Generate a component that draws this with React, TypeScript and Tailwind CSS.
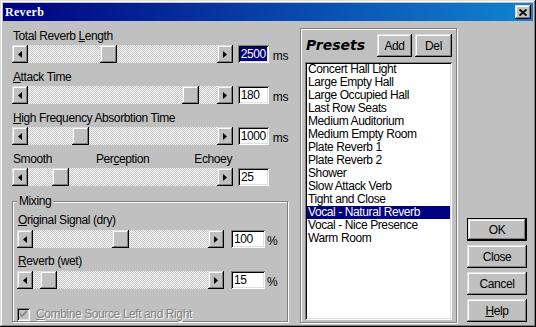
import React from "react";

const raised =
  "bg-[#c0c0c0] shadow-[inset_-1px_-1px_#000,inset_1px_1px_#dfdfdf,inset_-2px_-2px_#808080,inset_2px_2px_#fff]";
const sunken =
  "shadow-[inset_1px_1px_#808080,inset_-1px_-1px_#fff,inset_2px_2px_#000,inset_-2px_-2px_#dfdfdf]";
const etched = "border border-[#808080] shadow-[1px_1px_0_#fff,inset_1px_1px_0_#fff]";
const track =
  "bg-[repeating-conic-gradient(#c0c0c0_0_25%,#ffffff_0_50%)] bg-[length:2px_2px]";

const presets = [
  "Concert Hall Light",
  "Large Empty Hall",
  "Large Occupied Hall",
  "Last Row Seats",
  "Medium Auditorium",
  "Medium Empty Room",
  "Plate Reverb 1",
  "Plate Reverb 2",
  "Shower",
  "Slow Attack Verb",
  "Tight and Close",
  "Vocal - Natural Reverb",
  "Vocal - Nice Presence",
  "Warm Room",
];

function Arrow({ dir }: { dir: "left" | "right" }) {
  return (
    <div className={`w-[16px] h-full flex items-center justify-center ${raised}`}>
      <svg width="4" height="7" viewBox="0 0 4 7">
        {dir === "left" ? (
          <polygon points="4,0 0,3.5 4,7" fill="#000" />
        ) : (
          <polygon points="0,0 4,3.5 0,7" fill="#000" />
        )}
      </svg>
    </div>
  );
}

function Slider({ pos, width }: { pos: number; width: string }) {
  return (
    <div className={`flex h-[18px] ${width}`}>
      <Arrow dir="left" />
      <div className={`flex flex-1 ${track}`}>
        <div style={{ width: pos }} />
        <div className={`w-[17px] ${raised}`} />
      </div>
      <Arrow dir="right" />
    </div>
  );
}

function Field({ value, width, selected }: { value: string; width: string; selected?: boolean }) {
  return (
    <div className={`h-[18px] ${width} bg-white ${sunken} pl-[3px] pt-[2px] leading-[14px]`}>
      {selected ? <span className="bg-[#000080] text-white px-[1px] -ml-[1px]">{value}</span> : value}
    </div>
  );
}

function Btn({ children, w, def }: { children: React.ReactNode; w: string; def?: boolean }) {
  if (def)
    return (
      <div className={`${w} h-[23px] border border-black`}>
        <div className={`h-full flex items-center justify-center ${raised}`}>{children}</div>
      </div>
    );
  return <div className={`${w} h-[23px] flex items-center justify-center ${raised}`}>{children}</div>;
}

function Row({ label, pos, value, unit, selected }: any) {
  return (
    <div className="flex flex-col">
      <div className="h-[14px] leading-[14px] pl-[1px]">{label}</div>
      <div className="flex mt-[2px] items-start">
        <Slider pos={pos} width="w-[221px]" />
        <div className="ml-[5px]">
          <Field value={value} width="w-[31px]" selected={selected} />
        </div>
        {unit && <span className="ml-[4px] leading-[18px] pt-[2px]">{unit}</span>}
      </div>
    </div>
  );
}

function MixRow({ label, pos, value }: any) {
  return (
    <div className="flex flex-col">
      <div className="h-[14px] leading-[14px] pl-[1px]">{label}</div>
      <div className="flex mt-[3px] items-start">
        <Slider pos={pos} width="w-[207px]" />
        <div className="ml-[7px]">
          <Field value={value} width="w-[34px]" />
        </div>
        <span className="ml-[2px] leading-[18px] pt-[2px]">%</span>
      </div>
    </div>
  );
}

export default function App() {
  return (
    <div
      className="w-[536px] h-[327px] bg-[#c0c0c0] p-[3px] flex flex-col text-[12px] tracking-[-0.4px] text-black shadow-[inset_-1px_-1px_#000,inset_1px_1px_#dfdfdf,inset_-2px_-2px_#808080,inset_2px_2px_#fff]"
      style={{ fontFamily: '"Liberation Sans", Arial, sans-serif' }}
    >
      {/* title bar */}
      <div className="h-[18px] flex items-center bg-[linear-gradient(90deg,#000080,#1084d0)] pl-[2px] pr-[2px]">
        <span
          className="text-white font-bold text-[12px] tracking-[0.3px]"
          style={{ fontFamily: '"Liberation Serif", serif' }}
        >
          Reverb
        </span>
        <div className={`ml-auto w-[16px] h-[14px] flex items-center justify-center ${raised}`}>
          <svg width="8" height="7" viewBox="0 0 8 7">
            <path d="M0.5 0.5 L7.5 6.5 M7.5 0.5 L0.5 6.5" stroke="#000" strokeWidth="1.8" />
          </svg>
        </div>
      </div>

      <div className="flex flex-1 pl-[9px] pr-[6px] pb-[6px]">
        {/* left column */}
        <div className="w-[276px] pt-[8px] pb-[1px] flex flex-col">
          <div className="flex flex-col gap-[5px]">
            <Row
              label={<>Total Reverb <u>L</u>ength</>}
              pos={72}
              value="2500"
              unit="ms"
              selected
            />
            <Row label={<><u>A</u>ttack Time</>} pos={154} value="180" unit="ms" />
            <Row label={<><u>H</u>igh Frequency Absorbtion Time</>} pos={44} value="1000" unit="ms" />
            <Row
              label={
                <div className="flex w-[219px]">
                  <span>Smooth</span>
                  <span className="ml-[44px]">
                    Per<u>c</u>eption
                  </span>
                  <span className="ml-auto">Echoey</span>
                </div>
              }
              pos={24}
              value="25"
            />
          </div>

          <div className={`relative mt-[15px] flex-1 ${etched} pt-[11px] pl-[4px]`}>
            <span className="absolute -top-[8px] left-[4px] px-[2px] bg-[#c0c0c0] leading-[14px]">Mixing</span>
            <MixRow label={<><u>O</u>riginal Signal (dry)</>} pos={79} value="100" />
            <div className="mt-[4px]">
              <MixRow label={<><u>R</u>everb (wet)</>} pos={7} value="15" />
            </div>
            <div className="flex items-center mt-[16px] h-[14px]">
              <div className={`w-[13px] h-[13px] bg-[#c0c0c0] ${sunken} flex items-center justify-center`}>
                <svg width="7" height="7" viewBox="0 0 7 7">
                  <path d="M0 2 L0 4 L2 6 L7 1 L7 -1 L2 4 Z" fill="#808080" />
                </svg>
              </div>
              <span className="ml-[6px] text-[#808080] [text-shadow:1px_1px_#fff]">
                <u>C</u>ombine Source Left and Right
              </span>
            </div>
          </div>
        </div>

        {/* presets */}
        <div className={`ml-[12px] mt-[7px] w-[157px] flex flex-col ${etched} pb-[2px]`}>
          <div className="flex items-center pt-[5px] pl-[5px] pr-[4px]">
            <span
              className="font-bold italic text-[14px] tracking-normal"
              style={{ fontFamily: '"DejaVu Sans", sans-serif' }}
            >
              Presets
            </span>
            <div className="ml-auto">
              <Btn w="w-[35px]">Add</Btn>
            </div>
            <div className="ml-[3px]">
              <Btn w="w-[37px]">Del</Btn>
            </div>
          </div>
          <div className={`mx-[4px] mt-[5px] flex-1 bg-white ${sunken} p-[2px] pt-[1px]`}>
            {presets.map((p) => (
              <div
                key={p}
                className={`h-[13px] leading-[13px] pl-[1px] ${
                  p === "Vocal - Natural Reverb" ? "bg-[#000080] text-white" : ""
                }`}
              >
                {p}
              </div>
            ))}
          </div>
        </div>

        {/* buttons */}
        <div className="ml-[10px] w-[60px] flex flex-col justify-end gap-[4px] pb-[1px]">
          <Btn w="w-[60px]" def>
            OK
          </Btn>
          <Btn w="w-[60px]">Close</Btn>
          <Btn w="w-[60px]">Cancel</Btn>
          <Btn w="w-[60px]">
            <u>H</u>elp
          </Btn>
        </div>
      </div>
    </div>
  );
}
